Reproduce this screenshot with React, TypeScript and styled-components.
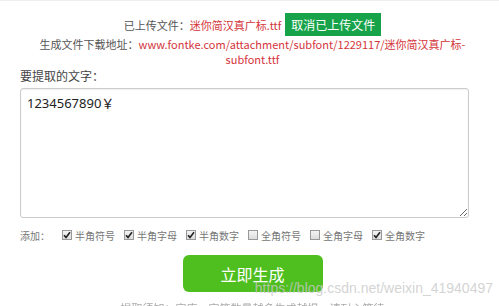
import React from 'react';
import styled, { createGlobalStyle } from 'styled-components';

const GlobalStyle = createGlobalStyle`
    html, body {
        margin: 0;
        padding: 0;
        background: #fff;
        overflow: hidden;
    }
    body {
        font-family: "Noto Sans CJK SC", "Noto Sans", sans-serif;
        color: #555;
    }
`;

const Page = styled.div`
    position: relative;
    width: 499px;
    height: 306px;
    border-top: 1px solid #eee;
    box-sizing: border-box;
    overflow: hidden;
`;

const Header = styled.div`
    padding: 12px 0 0 6px;
    text-align: center;
    font-size: 11px;
`;

const UploadRow = styled.div`
    display: flex;
    justify-content: center;
    align-items: center;
    height: 23px;
    gap: 4px;
`;

const Red = styled.span`
    color: #d4343a;
`;

const CancelButton = styled.button`
    border: none;
    background: #17a34a;
    color: #fff;
    font-family: inherit;
    font-size: 12px;
    height: 23px;
    padding: 0 6px;
    cursor: pointer;
`;

const LinkLine = styled.div`
    line-height: 15px;
    margin-top: 1px;
`;

const Body = styled.div`
    padding: 0 30px 0 20px;
`;

const Label = styled.div`
    font-size: 12px;
    line-height: 15px;
    margin-top: 1px;
    color: #444;
`;

const TextArea = styled.textarea`
    display: block;
    box-sizing: border-box;
    width: 449px;
    height: 130px;
    margin-top: 5px;
    padding: 6px;
    border: 1px solid #ccc;
    border-radius: 3px;
    box-shadow: inset 0 1px 2px rgba(0, 0, 0, 0.06);
    font-family: "Noto Sans", "Noto Sans CJK SC", sans-serif;
    font-size: 13px;
    line-height: 16px;
    color: #222;
    resize: vertical;
    outline: none;
`;

const OptionRow = styled.div`
    display: grid;
    grid-template-columns: 42px repeat(6, 62px);
    align-items: center;
    height: 18px;
    margin-top: 8px;
    font-size: 10px;
    color: #777;
`;

const Option = styled.label`
    display: flex;
    align-items: center;
    gap: 3px;
    white-space: nowrap;
`;

const Box = styled.span<{ $checked: boolean }>`
    display: inline-flex;
    align-items: center;
    justify-content: center;
    width: 8px;
    height: 8px;
    border: 1px solid #999;
    background: linear-gradient(#f4f4f4, #dcdcdc);
    box-sizing: content-box;
    svg {
        display: ${p => (p.$checked ? 'block' : 'none')};
    }
`;

const Submit = styled.div`
    display: flex;
    justify-content: center;
    padding-left: 6px;
    margin-top: 11px;
`;

const GenerateButton = styled.button`
    width: 140px;
    height: 37px;
    border: none;
    border-radius: 6px;
    background: #4fbf1f;
    color: #fff;
    font-family: "Noto Sans CJK SC", sans-serif;
    font-size: 16px;
    cursor: pointer;
`;

const Tip = styled.div`
    margin-top: 8px;
    padding-left: 6px;
    text-align: center;
    font-size: 11px;
    color: #aaa;
    filter: blur(0.4px);
`;

const Watermark = styled.div`
    position: absolute;
    right: 6px;
    top: 279px;
    font-family: "Liberation Sans", sans-serif;
    font-size: 14px;
    color: rgba(200, 200, 200, 0.8);
    pointer-events: none;
`;

const options = [
    { label: '半角符号', checked: true },
    { label: '半角字母', checked: true },
    { label: '半角数字', checked: true },
    { label: '全角符号', checked: false },
    { label: '全角字母', checked: false },
    { label: '全角数字', checked: true },
];

function Check({ checked }: { checked: boolean })
{
    return (
        <Box $checked={checked}>
            <svg width="8" height="8" viewBox="0 0 8 8">
                <path d="M1 4.2 L3 6.4 L7 1.2" fill="none" stroke="#222" strokeWidth="1.6" />
            </svg>
        </Box>
    );
}

export default function App()
{
    return (
        <Page>
            <GlobalStyle />
            <Header>
                <UploadRow>
                    <span>已上传文件：<Red>迷你简汉真广标.ttf</Red></span>
                    <CancelButton>取消已上传文件</CancelButton>
                </UploadRow>
                <LinkLine>
                    生成文件下载地址：<Red>www.fontke.com/attachment/subfont/1229117/迷你简汉真广标-<br />subfont.ttf</Red>
                </LinkLine>
            </Header>
            <Body>
                <Label>要提取的文字：</Label>
                <TextArea defaultValue="1234567890￥" />
                <OptionRow>
                    <span>添加：</span>
                    {options.map(o => (
                        <Option key={o.label}>
                            <Check checked={o.checked} />
                            {o.label}
                        </Option>
                    ))}
                </OptionRow>
            </Body>
            <Submit>
                <GenerateButton>立即生成</GenerateButton>
            </Submit>
            <Tip>提取须知：字库，字符数量越多生成越慢，请耐心等待</Tip>
            <Watermark>https://blog.csdn.net/weixin_41940497</Watermark>
        </Page>
    );
}
